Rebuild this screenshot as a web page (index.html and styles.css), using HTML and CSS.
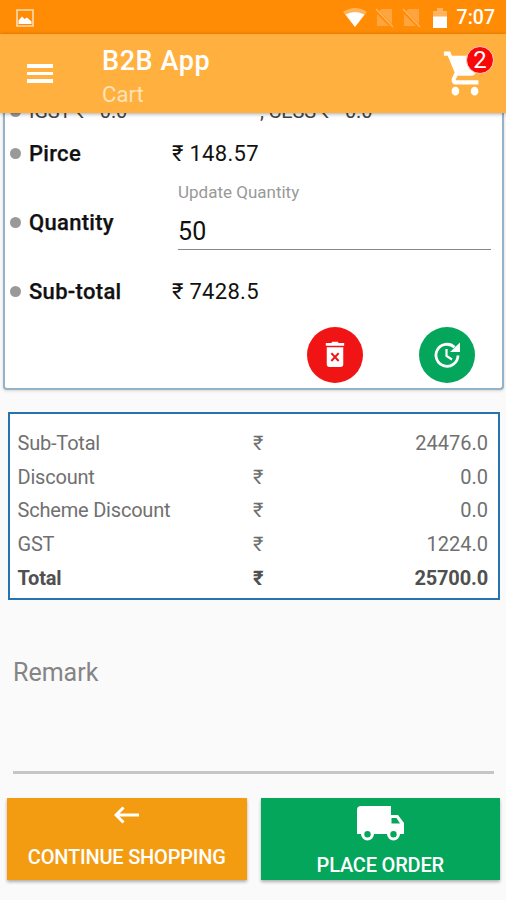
FILE: index.html
```html
<!DOCTYPE html>
<html lang="en">
<head>
<meta charset="utf-8">
<title>B2B App</title>
<link rel="stylesheet" href="styles.css">
</head>
<body>
<div class="status">
  <svg class="shot" viewBox="0 0 18 18"><path d="M1 1h16v16H1z" fill="none" stroke="#ffdcb5" stroke-width="1.6"/><path d="M2.500 15v-3.500l3.500-4 2.500 2.500 2.500-1.500 4.500 4V15z" fill="#fff"/></svg>
  <div class="status-right">
    <svg class="wifi" viewBox="0 0 24 19"><path d="M0 4Q12-4 24 4L12 19z" fill="#ffb35c"/><path d="M2.500 6.500q9.500-5 19 0L12 19z" fill="#fff"/></svg>
    <svg class="sim" viewBox="0 0 19 20"><path d="M7 1h10v15L4 3zM2 6l12 12H2z" fill="#ffa53f"/><path d="M1 1l17 18" stroke="#ffb35c" stroke-width="1.500"/></svg>
    <svg class="sim" viewBox="0 0 19 20"><path d="M7 1h10v15L4 3zM2 6l12 12H2z" fill="#ffa53f"/><path d="M1 1l17 18" stroke="#ffb35c" stroke-width="1.500"/></svg>
    <svg class="battery" viewBox="0 0 14 20"><path d="M0 3h4V0h6v3h4v6H0z" fill="#ffb35c"/><path d="M0 8.500h14V20H0z" fill="#fff"/></svg>
    <span class="time">7:07</span>
  </div>
</div>
<header class="appbar">
  <div class="menu"><i></i><i></i><i></i></div>
  <div class="titles">
    <h1>B2B App</h1>
    <p>Cart</p>
  </div>
  <div class="cart">
    <svg viewBox="0 0 24 24" preserveAspectRatio="none"><path fill="#fff" d="M7 18c-1.100 0-1.990.9-1.990 2S5.900 22 7 22s2-.9 2-2-.9-2-2-2zM1 2v2h2l3.600 7.590-1.350 2.450c-.16.28-.25.61-.25.960 0 1.100.9 2 2 2h12v-2H7.420c-.14 0-.25-.11-.25-.25l.03-.12.9-1.630h7.450c.75 0 1.410-.41 1.750-1.030l3.580-6.490A1 1 0 0 0 20 4H5.210l-.94-2H1zm16 16c-1.100 0-1.990.9-1.990 2s.89 2 1.990 2 2-.9 2-2-.9-2-2-2z"/></svg>
    <span class="badge">2</span>
  </div>
</header>
<main>
  <section class="item">
    <div class="row tax"><span class="dot"></span><span class="igst">IGST ₹ &nbsp; 0.0</span><span>, CESS ₹ &nbsp; 0.0</span></div>
    <div class="row"><span class="dot"></span><b>Pirce</b><span class="value">₹ 148.57</span></div>
    <div class="row quantity"><span class="dot"></span><b>Quantity</b>
      <div class="field"><label>Update Quantity</label><div class="input">50</div></div>
    </div>
    <div class="row"><span class="dot"></span><b>Sub-total</b><span class="value">₹ 7428.5</span></div>
    <div class="actions">
      <div class="round delete"><svg viewBox="0 0 24 30"><path fill="#fff" d="M8 2l1-1.500h6L16 2h6v3H2V2zM3 6.500h18V25q0 3-3 3H6q-3 0-3-3z"/><path d="M8 13l8 8.500M16 13l-8 8.500" stroke="#f01414" stroke-width="2.200"/></svg></div>
      <div class="round update"><svg viewBox="0 0 28 28" fill="none" stroke="#fff"><path stroke-width="2.800" d="M21.500 6.200A11 11 0 1 0 25 14.500"/><path d="M27 1.500v9.500H17z" fill="#fff" stroke="none"/><path stroke-width="2.200" d="M13.500 8v7l5.500 3.500"/></svg></div>
    </div>
  </section>
  <section class="totals">
    <div><span>Sub-Total</span><span>₹</span><span>24476.0</span></div>
    <div><span>Discount</span><span>₹</span><span>0.0</span></div>
    <div><span>Scheme Discount</span><span>₹</span><span>0.0</span></div>
    <div><span>GST</span><span>₹</span><span>1224.0</span></div>
    <div class="grand"><span>Total</span><span>₹</span><span>25700.0</span></div>
  </section>
  <div class="remark">Remark</div>
  <div class="buttons">
    <div class="button continue"><svg viewBox="0 0 26 18"><path d="M25 9H2M9.500 1.500L2 9l7.500 7.500" fill="none" stroke="#fff" stroke-width="3"/></svg><span>CONTINUE SHOPPING</span></div>
    <div class="button place"><svg viewBox="0 0 47 35"><path fill="#fff" fill-rule="evenodd" d="M4 0h30v9h7l6 8v11h-4a6.500 6.500 0 0 1-13 0H17a6.500 6.500 0 0 1-13 0H0V4q0-4 4-4zM34.500 12v5.500H43L39.500 12zM10.500 25a3.200 3.200 0 1 0 0 6.400 3.200 3.200 0 0 0 0-6.400zM36.500 25a3.200 3.200 0 1 0 0 6.400 3.200 3.200 0 0 0 0-6.400z"/></svg><span>PLACE ORDER</span></div>
  </div>
</main>
</body>
</html>
```

FILE: styles.css
```css
* { box-sizing: border-box; }
body {
  margin: 0;
  height: 900px;
  display: flex;
  flex-direction: column;
  overflow: hidden;
  background: #fafafa;
  font-family: Roboto, "Noto Sans", sans-serif;
  color: #111;
}
svg { display: block; flex: none; }
h1, p { margin: 0; }

.status {
  height: 34px;
  flex: none;
  display: flex;
  align-items: center;
  justify-content: space-between;
  padding: 1px 11px 0 16px;
  background: #ff8c04;
}
.shot { width: 18px; height: 18px; }
.status-right { display: flex; align-items: center; }
.wifi { width: 24px; height: 19px; margin-right: 8px; }
.sim { width: 19px; height: 20px; margin-right: 8px; }
.battery { width: 14px; height: 20px; margin: 0 10px 0 4px; }
.time { font-size: 19.500px; font-weight: 500; color: #fff; }

.appbar {
  height: 79px;
  flex: none;
  position: relative;
  z-index: 1;
  display: flex;
  background: #ffb03e;
  color: #fff;
  box-shadow: 0 1px 4px rgba(0, 0, 0, .35);
}
.menu {
  width: 26px;
  margin: 30px 49px 0 27px;
  display: flex;
  flex-direction: column;
  gap: 4px;
}
.menu i { height: 3.500px; background: #fff; }
.titles { flex: 1; padding-top: 10px; }
.titles h1 { font-size: 27px; line-height: 34px; font-weight: 500; letter-spacing: .6px; }
.titles p { font-size: 22px; line-height: 34px; color: #ffe3ba; letter-spacing: .1px; }
.cart { position: relative; width: 46px; margin: 13px 18px 0 0; }
.cart svg { width: 46px; height: 53px; }
.badge {
  position: absolute;
  left: 24px;
  top: -1px;
  width: 28px;
  height: 28px;
  border-radius: 50%;
  border: 1px solid #ffd0c0;
  background: #f80808;
  font-size: 24px;
  line-height: 27px;
  text-align: center;
}

main { flex: 1; overflow: hidden; }
.item {
  display: flow-root;
  margin: 0 2px 0 3px;
  height: 277px;
  background: #fff;
  border: 2px solid #94b2c8;
  border-top: 0;
  border-radius: 0 0 4px 4px;
  box-shadow: 0 1px 3px rgba(0, 0, 0, .15);
}
.row {
  height: 58px;
  display: flex;
  align-items: center;
  padding: 0 11px 1px 5px;
  font-size: 22px;
  letter-spacing: .3px;
}
.row b { width: 143px; font-weight: 500; -webkit-text-stroke: .25px; }
.dot { width: 11px; height: 11px; margin-right: 8px; border-radius: 50%; background: #999; flex: none; }
.tax { height: 26px; margin-top: -14px; padding-bottom: 2px; font-size: 20px; color: #444; letter-spacing: -.2px; }
.igst { width: 231px; }
.quantity { height: 80px; }
.quantity b { width: 149px; }
.field { flex: 1; align-self: stretch; }
.field label { display: block; font-size: 17px; line-height: 18px; color: #999; letter-spacing: 0; }
.input { height: 49px; border-bottom: 1.500px solid #888; font-size: 25px; line-height: 61px; }
.actions { display: flex; justify-content: flex-end; gap: 56px; padding: 6px 27px 0 0; }
.round { width: 56px; height: 56px; border-radius: 50%; display: grid; place-items: center; }
.delete { background: #f01414; }
.update { background: #04a65c; }
.delete svg { width: 22px; height: 28px; }
.update svg { width: 28px; height: 28px; }

.totals {
  height: 188px;
  margin: 22px 6.500px 0 8px;
  padding: 12px 9.500px 0 7.500px;
  border: 2px solid #2673b0;
  background: #fff;
  font-size: 20px;
  color: #707070;
}
.totals div {
  height: 33.700px;
  display: grid;
  grid-template-columns: 235.500px 40px 1fr;
  align-items: center;
}
.totals span:first-child { letter-spacing: -.2px; }
.totals span:last-child { text-align: right; }
.totals .grand { color: #505050; font-weight: 700; }
.totals .grand span { letter-spacing: -.15px; }

.remark {
  height: 120px;
  margin: 54px 12px 0 13px;
  border-bottom: 3px solid #c6c6c6;
  font-size: 25px;
  line-height: 38px;
  color: #858585;
}

.buttons { display: flex; gap: 14px; padding: 24px 6px 0 7px; }
.button {
  flex: 1;
  height: 82px;
  display: flex;
  flex-direction: column;
  align-items: center;
  justify-content: space-between;
  color: #fff;
  font-size: 20px;
  font-weight: 500;
  letter-spacing: -.2px;
  line-height: 24px;
  box-shadow: 0 2px 3px rgba(0, 0, 0, .3);
}
.continue { background: #f39c12; padding: 8px 0 11px; }
.place { background: #04a65c; padding: 8px 0 3px; }
.continue svg { width: 26px; height: 18px; }
.place svg { width: 47px; height: 35px; }
```
